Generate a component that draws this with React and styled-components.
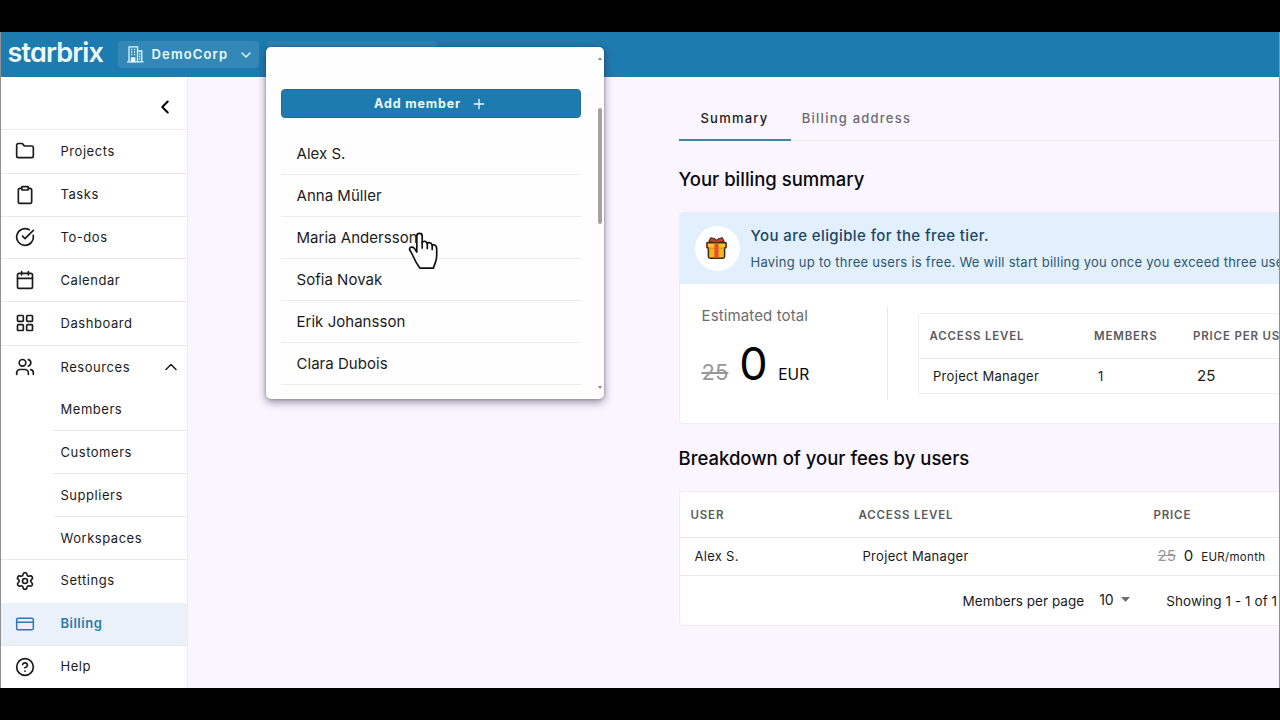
import React from 'react'
import styled, { createGlobalStyle } from 'styled-components'
import {
  Folder, Clipboard, Calendar, LayoutGrid, Users, Settings, CreditCard,
  CircleHelp, ChevronLeft, ChevronUp, ChevronDown, CircleCheckBig, Plus,
} from 'lucide-react'

const GlobalStyle = createGlobalStyle`
  * { box-sizing: border-box; }
  body {
    margin: 0;
    background: #000;
    font-family: Inter, "Liberation Sans", sans-serif;
    color: #1b1b1d;
    overflow: hidden;
  }
`

const Screen = styled.div`
  width: 1280px;
  height: 720px;
  padding: 32px 0;
  background: #000;
  overflow: hidden;
`

const Window = styled.div`
  position: relative;
  display: flex;
  flex-direction: column;
  width: 1280px;
  height: 656px;
  background: #faf5ff;
  border-left: 1px solid #8f8f92;
  border-right: 1px solid #8f8f92;
  overflow: hidden;
`

const Text = styled.span`
  font-size: ${p => p.$size || 13}px;
  font-weight: ${p => p.$weight || 400};
  letter-spacing: ${p => p.$space || 0}px;
  color: ${p => p.$color || 'inherit'};
  text-decoration: ${p => (p.$strike ? 'line-through' : 'none')};
  line-height: 20px;
  white-space: nowrap;
`

const TopBar = styled.header`
  display: flex;
  align-items: center;
  height: 45px;
  flex: none;
  padding-left: 7px;
  margin: 0 -1px;
  background: #1e7bb0;
  color: #e9fbff;
`

const Logo = styled.div`
  width: 111px;
  height: 45px;
  padding-left: 0.5px;
  font-size: 27px;
  line-height: 42px;
  font-weight: 600;
  letter-spacing: -0.85px;
  font-feature-settings: "cv11";
  color: #effcff;
`

const OrgSelect = styled.div`
  display: flex;
  align-items: center;
  width: 141px;
  height: 27px;
  padding: 0 5px 0 9px;
  border-radius: 4px;
  background: #3488b8;
  svg:last-child { margin-left: auto; }
`

const OrgName = styled(Text)`
  margin: 0 0 2px 7.5px;
`

const TeamSelect = styled.div`
  width: 170px;
  height: 27px;
  margin-left: 8px;
  border-radius: 4px;
  background: #2d84b5;
`

const Body = styled.div`
  display: flex;
  flex: 1;
`

const Sidebar = styled.nav`
  width: 187px;
  flex: none;
  background: #fff;
  border-right: 1px solid #eeeaf3;
`

const Collapse = styled.div`
  display: flex;
  align-items: center;
  justify-content: flex-end;
  height: 53px;
  padding: 7px 11px 0 0;
  border-bottom: 1px solid #ebebed;
  color: #000;
`

const NavItem = styled.div`
  display: flex;
  align-items: center;
  height: ${p => p.$h}px;
  padding: 0 6px 0 14px;
  border-bottom: 1px solid ${p => (p.$noLine ? 'transparent' : '#e9e9ec')};
  background: ${p => (p.$active ? '#eaf1fa' : 'transparent')};
  color: ${p => (p.$active ? '#2a7ba8' : '#1b1b1d')};
  svg {
    flex: none;
    margin-bottom: ${p => (p.$lift ? 1 : 0)}px;
  }
`

const NavLabel = styled(Text)`
  flex: 1;
  margin-left: 25.5px;
  padding-bottom: ${p => (p.$level ? 0 : 2)}px;
`

const SubItem = styled.div`
  display: flex;
  align-items: center;
  height: ${p => p.$h}px;
  margin-left: ${p => (p.$last ? 0 : 52)}px;
  padding: 0 0 1px ${p => (p.$last ? 59.5 : 7.5)}px;
  border-bottom: 1px solid #e9e9ec;
`

const Main = styled.main`
  width: 640px;
  flex: none;
  margin-left: 490.5px;
`

const Tabs = styled.div`
  display: flex;
  height: 64px;
  border-bottom: 1px solid #efe9f4;
`

const Tab = styled.div`
  width: ${p => p.$w}px;
  height: 64px;
  padding-top: 30px;
  text-align: center;
  border-bottom: 2px solid ${p => (p.$active ? '#3f83a8' : 'transparent')};
`

const Heading = styled.h2`
  margin: ${p => p.$top}px 0 0;
  font-size: 18.5px;
  font-weight: 500;
  line-height: 24px;
  color: #09090b;
`

const Card = styled.section`
  margin-top: ${p => p.$top}px;
  height: ${p => p.$h}px;
  background: #fff;
  border: 1px solid #f0ebf6;
  border-radius: 4px;
  overflow: hidden;
`

const Banner = styled.div`
  display: flex;
  align-items: center;
  height: 71px;
  padding-left: 15px;
  background: #e2effd;
`

const GiftCircle = styled.div`
  display: flex;
  align-items: center;
  justify-content: center;
  width: 45px;
  height: 45px;
  margin-top: -1px;
  padding: 0 1px 1px 0;
  border-radius: 50%;
  background: #fff;
`

const BannerText = styled.div`
  display: flex;
  flex-direction: column;
  gap: 6px;
  margin: 0 0 0 11px;
`

const Totals = styled.div`
  display: flex;
  padding: 23px 0 0 22px;
`

const Estimate = styled.div`
  width: 186px;
  height: 93px;
  flex: none;
  border-right: 1px solid #e9e9ec;
`

const Label = styled(Text)`
  display: block;
  margin-top: -1px;
`

const Amount = styled.div`
  display: flex;
  align-items: baseline;
  margin-top: 15px;
  color: #050506;
`

const BigZero = styled.span`
  width: 39px;
  margin: 0 0 0 11px;
  font-size: 45px;
  line-height: 45px;
`

const LevelTable = styled.div`
  width: 420px;
  height: 81px;
  flex: none;
  margin: 6px 0 0 30px;
  border: 1px solid #ededf0;
  border-radius: 3px;
`

const Row = styled.div`
  display: grid;
  grid-template-columns: ${p => p.$cols};
  align-items: center;
  height: ${p => p.$h}px;
  padding-left: ${p => p.$pad}px;
  padding-bottom: ${p => p.$lift || 0}px;
  border-bottom: 1px solid ${p => (p.$noLine ? 'transparent' : '#eaeaed')};
`

const Price = styled.div`
  display: flex;
  align-items: baseline;
  gap: 8px;
`

const Footer = styled.div`
  display: flex;
  align-items: center;
  height: 49px;
  padding-left: 283px;
`

const PageSize = styled.div`
  display: flex;
  align-items: center;
  gap: 7px;
  margin: -2px 36.5px 0 15px;
`

const Popup = styled.div`
  position: absolute;
  left: 265px;
  top: 15px;
  width: 338px;
  height: 352px;
  padding: 42px 23px 0 15px;
  background: #fefefe;
  border-radius: 5px;
  box-shadow: 0 3px 8px rgba(40, 30, 60, .5), 0 0 3px rgba(40, 30, 60, .3);
`

const AddButton = styled.button`
  display: flex;
  align-items: center;
  justify-content: center;
  gap: 10px;
  width: 300px;
  height: 29px;
  margin-bottom: 15px;
  padding: 1px 1px 0 0;
  border: 1px solid #246a94;
  border-radius: 4px;
  background: #1e7bb0;
  color: #e8faff;
  font-family: inherit;
`

const Member = styled.div`
  display: flex;
  align-items: center;
  height: 42px;
  padding-left: 15.5px;
  border-bottom: 1px solid #ececee;
`

const Scrollbar = styled.div`
  position: absolute;
  right: 0;
  top: 10px;
  bottom: 10px;
  width: 6px;
  display: flex;
  flex-direction: column;
  justify-content: space-between;
`

const Thumb = styled.div`
  width: 4px;
  height: 116px;
  margin-top: 48px;
  margin-bottom: auto;
  border-radius: 2px;
  background: #a3a3a5;
`

const Pointer = styled.svg`
  position: absolute;
  left: 407px;
  top: 199px;
`

const navItems = [
  { label: 'Projects', icon: Folder, h: 44, lift: true },
  { label: 'Tasks', icon: Clipboard, h: 43, lift: true },
  { label: 'To-dos', icon: CircleCheckBig, h: 42, lift: true },
  { label: 'Calendar', icon: Calendar, h: 43, level: true },
  { label: 'Dashboard', icon: LayoutGrid, h: 44, lift: true },
]

const subItems = [
  { label: 'Members', h: 43 },
  { label: 'Customers', h: 43 },
  { label: 'Suppliers', h: 43 },
  { label: 'Workspaces', h: 43, last: true },
]

const members = ['Alex S.', 'Anna Müller', 'Maria Andersson', 'Sofia Novak', 'Erik Johansson', 'Clara Dubois']

const BuildingIcon = () => (
  <svg width="17" height="17" viewBox="0 0 17 17" fill="none" stroke="#dff6ff" strokeWidth="1.3">
    <path d="M0 15.9h16.5M2 15.5V.8h8.5v14.7M10.5 5h4.3v10.5" />
    <path d="M4 3.5h1.3M6.9 3.5h1.3M4 6h1.3M6.9 6h1.3M4 8.5h1.3M6.9 8.5h1.3M12 8h1.3M12 10.5h1.3M12 13h1.3" />
    <path d="M4.5 12h3.3v3.5H4.5z" fill="#fff" />
  </svg>
)

const GiftIcon = () => (
  <svg width="21" height="24" viewBox="0 0 22 24" strokeLinejoin="round">
    <path d="M2.5 10h17v11q0 1.8-1.8 1.8H4.3q-1.8 0-1.8-1.8z" fill="#f5b51c" stroke="#3d2b20" strokeWidth="1.6" />
    <path d="M1 6.5h20v5.3H1z" fill="#fcc62c" stroke="#3d2b20" strokeWidth="1.6" />
    <path d="M2.8 11.8h16.4" stroke="#f0ac1a" strokeWidth="2" />
    <path d="M8.8 6h4.4v16.2H8.8z" fill="#e8502b" />
    <path d="M11 6.5L3 5.3 5 1.2l3.3.8L11 4l2.7-2 3.3-.8 2 4.1z" fill="#d93c2b" stroke="#3d2b20" strokeWidth="1.1" />
  </svg>
)

const Sidenav = () => (
  <Sidebar>
    <Collapse><ChevronLeft size={22} strokeWidth={2.2} /></Collapse>
    {navItems.map(({ label, icon: Icon, h, lift, level }) => (
      <NavItem key={label} $h={h} $lift={lift}>
        <Icon size={20} strokeWidth={2} />
        <NavLabel $space={0.55} $level={level}>{label}</NavLabel>
      </NavItem>
    ))}
    <NavItem $h={42} $noLine>
      <Users size={20} strokeWidth={2} />
      <NavLabel $space={0.55} $level>Resources</NavLabel>
      <ChevronUp size={20} strokeWidth={1.8} />
    </NavItem>
    {subItems.map(s => (
      <SubItem key={s.label} $h={s.h} $last={s.last}>
        <Text $space={0.53}>{s.label}</Text>
      </SubItem>
    ))}
    <NavItem $h={43} $noLine>
      <Settings size={20} strokeWidth={2} />
      <NavLabel $space={0.55}>Settings</NavLabel>
    </NavItem>
    <NavItem $h={43} $active $lift>
      <CreditCard size={20} strokeWidth={1.8} />
      <NavLabel $weight={600} $space={0.5}>Billing</NavLabel>
    </NavItem>
    <NavItem $h={43} $noLine $lift>
      <CircleHelp size={20} strokeWidth={2} />
      <NavLabel $space={0.55}>Help</NavLabel>
    </NavItem>
  </Sidebar>
)

const HeadText = ({ children }) => (
  <Text $size={11.5} $weight={600} $space={0.83} $color="#5b5b5f">{children}</Text>
)

const Billing = () => (
  <Main>
    <Tabs>
      <Tab $w={112} $active><Text $weight={500} $space={1.23}>Summary</Text></Tab>
      <Tab $w={132}><Text $weight={500} $space={1.23} $color="#6c6a72">Billing address</Text></Tab>
    </Tabs>
    <Heading $top={26}>Your billing summary</Heading>
    <Card $top={21} $h={212}>
      <Banner>
        <GiftCircle><GiftIcon /></GiftCircle>
        <BannerText>
          <Text $size={15} $weight={500} $space={0.4} $color="#1c4664">You are eligible for the free tier.</Text>
          <Text $space={0.26} $color="#2e566f">Having up to three users is free. We will start billing you once you exceed three users.</Text>
        </BannerText>
      </Banner>
      <Totals>
        <Estimate>
          <Label $size={15} $space={0.12} $color="#6c6c70">Estimated total</Label>
          <Amount>
            <Text $size={22} $color="#97979a" $strike>25</Text>
            <BigZero>0</BigZero>
            <Text $size={15.5}>EUR</Text>
          </Amount>
        </Estimate>
        <LevelTable>
          <Row $h={45} $pad={11} $cols="164.5px 99px 120px">
            <HeadText>ACCESS LEVEL</HeadText>
            <HeadText>MEMBERS</HeadText>
            <HeadText>PRICE PER USER</HeadText>
          </Row>
          <Row $h={34} $pad={14.5} $cols="165px 99px 120px" $noLine>
            <Text $space={0.32}>Project Manager</Text>
            <Text>1</Text>
            <Text $size={15}>25</Text>
          </Row>
        </LevelTable>
      </Totals>
    </Card>
    <Heading $top={22}>Breakdown of your fees by users</Heading>
    <Card $top={21} $h={135}>
      <Row $h={46} $pad={11} $cols="168px 295px 120px">
        <HeadText>USER</HeadText>
        <HeadText>ACCESS LEVEL</HeadText>
        <HeadText>PRICE</HeadText>
      </Row>
      <Row $h={38} $pad={15} $lift={1} $cols="168px 295px 120px">
        <Text $space={0.28}>Alex S.</Text>
        <Text $space={0.32}>Project Manager</Text>
        <Price>
          <Text $size={15} $color="#97979a" $strike>25</Text>
          <Text $size={15}>0</Text>
          <Text $size={11.5} $space={0.3}>EUR/month</Text>
        </Price>
      </Row>
      <Footer>
        <Text $size={13.5} $space={0.03}>Members per page</Text>
        <PageSize>
          <Text $size={14}>10</Text>
          <svg width="9" height="5" viewBox="0 0 9 5"><path d="M0 0h9L4.5 5z" fill="#6e6e72" /></svg>
        </PageSize>
        <Text $size={13.5} $space={0.06}>Showing 1 - 1 of 1</Text>
      </Footer>
    </Card>
  </Main>
)

const MemberPopup = () => (
  <Popup>
    <AddButton>
      <Text $size={12.5} $weight={700} $space={0.85}>Add member</Text>
      <Plus size={16} strokeWidth={2} />
    </AddButton>
    {members.map(name => (
      <Member key={name}><Text $size={15} $space={0.03}>{name}</Text></Member>
    ))}
    <Scrollbar>
      <svg width="4" height="3" viewBox="0 0 4 3"><path d="M0 3L2 0l2 3z" fill="#8a8a8d" /></svg>
      <Thumb />
      <svg width="4" height="3" viewBox="0 0 4 3"><path d="M0 0l2 3 2-3z" fill="#8a8a8d" /></svg>
    </Scrollbar>
  </Popup>
)

const App = () => (
  <>
    <GlobalStyle />
    <Screen>
      <Window>
        <TopBar>
          <Logo>starbrix</Logo>
          <OrgSelect>
            <BuildingIcon />
            <OrgName $weight={600} $space={1.15}>DemoCorp</OrgName>
            <ChevronDown size={16} strokeWidth={2} />
          </OrgSelect>
          <TeamSelect />
        </TopBar>
        <Body>
          <Sidenav />
          <Billing />
        </Body>
        <MemberPopup />
        <Pointer width="32" height="40" viewBox="0 0 32 40" fill="#fff" stroke="#111" strokeWidth="1.7" strokeLinejoin="round" strokeLinecap="round">
          <path d="M8.8 21V5C8.800 1.500 14.200 1.500 14.200 5V11.500C15.500 9.500 18.800 10 19.300 12.500C20.500 11 23.600 11.500 24.200 14.200C26 13 28.700 14.500 28.700 17.500V25C28.700 30 26.500 33 25.300 37.200H12C9 33.500 6.500 28.500 5 25C4 22.500 2.800 21 1.800 19C.8 16.500 4 15 6 17C7.500 18.500 8 20 8.800 21Z" />
          <path d="M14.200 11.500V17M19.300 12.500V17.500M24.200 14.200V18.500" fill="none" />
        </Pointer>
      </Window>
    </Screen>
  </>
)

export default App
